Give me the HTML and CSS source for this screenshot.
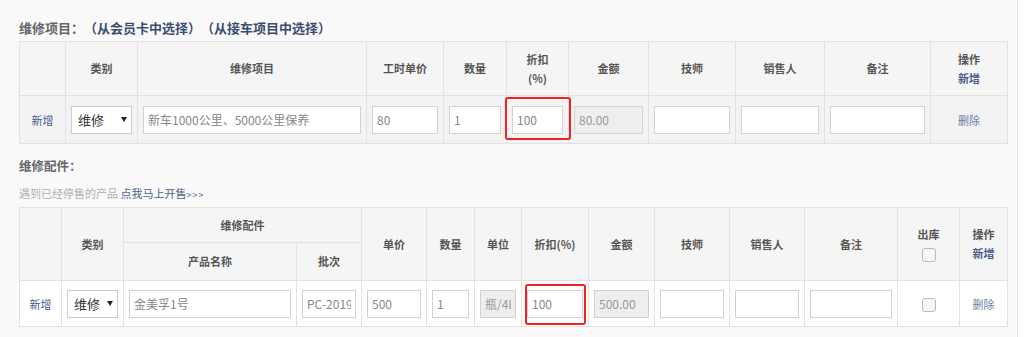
FILE: index.html
```html
<!DOCTYPE html>
<html lang="zh-CN">
<head>
    <meta charset="UTF-8" />
    <title>维修项目</title>
    <link rel="stylesheet" href="styles.css">
</head>
<body>
    <div class="page">
        <h3 class="sec-title">维修项目：<a href="#">（从会员卡中选择）</a><a href="#">（从接车项目中选择）</a></h3>
        <table class="grid grid-item">
            <colgroup>
                <col style="width:46px"><col style="width:72px"><col style="width:229px"><col style="width:77px">
                <col style="width:63px"><col style="width:62px"><col style="width:80px"><col style="width:87px">
                <col style="width:89px"><col style="width:106px"><col style="width:77px">
            </colgroup>
            <thead>
                <tr class="head">
                    <th></th>
                    <th>类别</th>
                    <th>维修项目</th>
                    <th>工时单价</th>
                    <th>数量</th>
                    <th>折扣<br>(%)</th>
                    <th>金额</th>
                    <th>技师</th>
                    <th>销售人</th>
                    <th>备注</th>
                    <th>操作<br><a href="#" class="add">新增</a></th>
                </tr>
            </thead>
            <tbody>
                <tr class="row">
                    <td><a href="#" class="add">新增</a></td>
                    <td><span class="sel"><select><option>维修</option></select></span></td>
                    <td><input type="text" value="新车1000公里、5000公里保养"></td>
                    <td><input type="text" value="80"></td>
                    <td><input type="text" value="1"></td>
                    <td><span class="mark mark-1"><input type="text" value="100"></span></td>
                    <td><input type="text" value="80.00" disabled></td>
                    <td><input type="text"></td>
                    <td><input type="text"></td>
                    <td><input type="text"></td>
                    <td><a href="#" class="del">删除</a></td>
                </tr>
            </tbody>
        </table>

        <h3 class="sec-title sec-parts">维修配件：</h3>
        <p class="hint">遇到已经停售的产品 <a href="#">点我马上开售<span class="arr">&gt;&gt;&gt;</span></a></p>
        <table class="grid grid-parts">
            <colgroup>
                <col style="width:42px"><col style="width:62px"><col style="width:173px"><col style="width:65px">
                <col style="width:65px"><col style="width:48px"><col style="width:47px"><col style="width:67px">
                <col style="width:66px"><col style="width:75px"><col style="width:75px"><col style="width:93px">
                <col style="width:62px"><col style="width:48px">
            </colgroup>
            <thead>
                <tr class="head-a">
                    <th rowspan="2"></th>
                    <th rowspan="2">类别</th>
                    <th colspan="2">维修配件</th>
                    <th rowspan="2">单价</th>
                    <th rowspan="2">数量</th>
                    <th rowspan="2">单位</th>
                    <th rowspan="2">折扣(%)</th>
                    <th rowspan="2">金额</th>
                    <th rowspan="2">技师</th>
                    <th rowspan="2">销售人</th>
                    <th rowspan="2">备注</th>
                    <th rowspan="2">出库<br><input type="checkbox" class="chk"></th>
                    <th rowspan="2">操作<br><a href="#" class="add">新增</a></th>
                </tr>
                <tr class="head-b">
                    <th>产品名称</th>
                    <th>批次</th>
                </tr>
            </thead>
            <tbody>
                <tr class="row-b">
                    <td><a href="#" class="add">新增</a></td>
                    <td><span class="sel"><select><option>维修</option></select></span></td>
                    <td><input type="text" value="金美孚1号"></td>
                    <td><input type="text" value="PC-2019"></td>
                    <td><input type="text" value="500"></td>
                    <td><input type="text" value="1"></td>
                    <td><input type="text" value="瓶/4L" disabled></td>
                    <td><span class="mark mark-2"><input type="text" value="100"></span></td>
                    <td><input type="text" value="500.00" disabled></td>
                    <td><input type="text"></td>
                    <td><input type="text"></td>
                    <td><input type="text"></td>
                    <td><input type="checkbox" class="chk"></td>
                    <td><a href="#" class="del">删除</a></td>
                </tr>
            </tbody>
        </table>
    </div>
</body>
</html>
```

FILE: styles.css
```css
*{
    margin:0;
    padding:0;
    box-sizing:border-box;
}
body{
    background:#fff;
    font-family:"Noto Sans CJK SC","Liberation Sans",sans-serif;
    color:#555;
}
a{
    text-decoration:none;
}
.page{
    width:1018px;
    height:337px;
    background:#f9f9f9;
    border-right:1px solid #e4e4e4;
    padding:18px 10px 0 19px;
}
.sec-title{
    height:20px;
    font-size:13px;
    line-height:20px;
    font-weight:bold;
    color:#666;
    margin-bottom:3px;
    text-spacing-trim:space-all;
    font-feature-settings:"chws" 0, "halt" 0;
}
.sec-title a{
    color:#3d4d70;
}
.sec-parts{
    margin-top:12px;
    margin-bottom:0;
    font-size:12.5px;
}
.hint{
    height:16px;
    margin-top:9px;
    margin-bottom:6px;
    font-size:11px;
    line-height:16px;
    color:#b0b0b0;
}
.hint a{
    color:#52628c;
}
.arr{
    font-size:9px;
    line-height:16px;
    letter-spacing:1px;
}
.grid{
    width:988px;
    border-collapse:collapse;
    table-layout:fixed;
}
.grid th,
.grid td{
    border:1px solid #e2e2e2;
    text-align:center;
    vertical-align:middle;
    padding:0 5px;
    font-size:11px;
}
.grid th{
    background:#f5f5f5;
    font-weight:bold;
    color:#555;
    line-height:19px;
}
.grid-item .head{
    height:54px;
}
.grid-item .row{
    height:48px;
}
.grid-item td{
    background:#f3f3f3;
}
.grid-parts .head-a{
    height:35px;
}
.grid-parts .head-b{
    height:38px;
}
.grid-parts .row-b{
    height:46px;
}
.grid-parts td{
    background:#fff;
}
.add{
    color:#4a5a8a;
}
.del{
    color:#7080a4;
}
.grid input[type=text]{
    display:block;
    width:100%;
    height:28px;
    border:1px solid #d2d2d2;
    background:#fff;
    padding:0 4px;
    font-family:inherit;
    font-size:12px;
    color:#888;
    outline:none;
}
.grid input[disabled]{
    background:#eee;
    color:#999;
}
.sel{
    display:block;
    position:relative;
}
.sel select{
    -webkit-appearance:none;
    appearance:none;
    display:block;
    width:100%;
    height:28px;
    border:1px solid #ccc;
    border-radius:0;
    background:#fff;
    padding:0 6px;
    font-family:inherit;
    font-size:13px;
    color:#333;
}
.sel::after{
    content:"";
    position:absolute;
    right:5px;
    top:11px;
    border-left:3.5px solid transparent;
    border-right:3.5px solid transparent;
    border-top:5px solid #222;
}
.mark{
    display:block;
    position:relative;
}
.mark::after{
    content:"";
    position:absolute;
    border:2px solid #ee2222;
    border-radius:3px;
    pointer-events:none;
}
.mark-1::after{
    top:-9px;
    right:-8px;
    bottom:-6px;
    left:-7px;
}
.mark-2::after{
    top:-6px;
    right:-3px;
    bottom:-7px;
    left:-2px;
}
.chk{
    -webkit-appearance:none;
    appearance:none;
    display:inline-block;
    width:14px;
    height:14px;
    border:1px solid #bbb;
    border-radius:3px;
    background:#f7f7f7;
    vertical-align:middle;
}
```
